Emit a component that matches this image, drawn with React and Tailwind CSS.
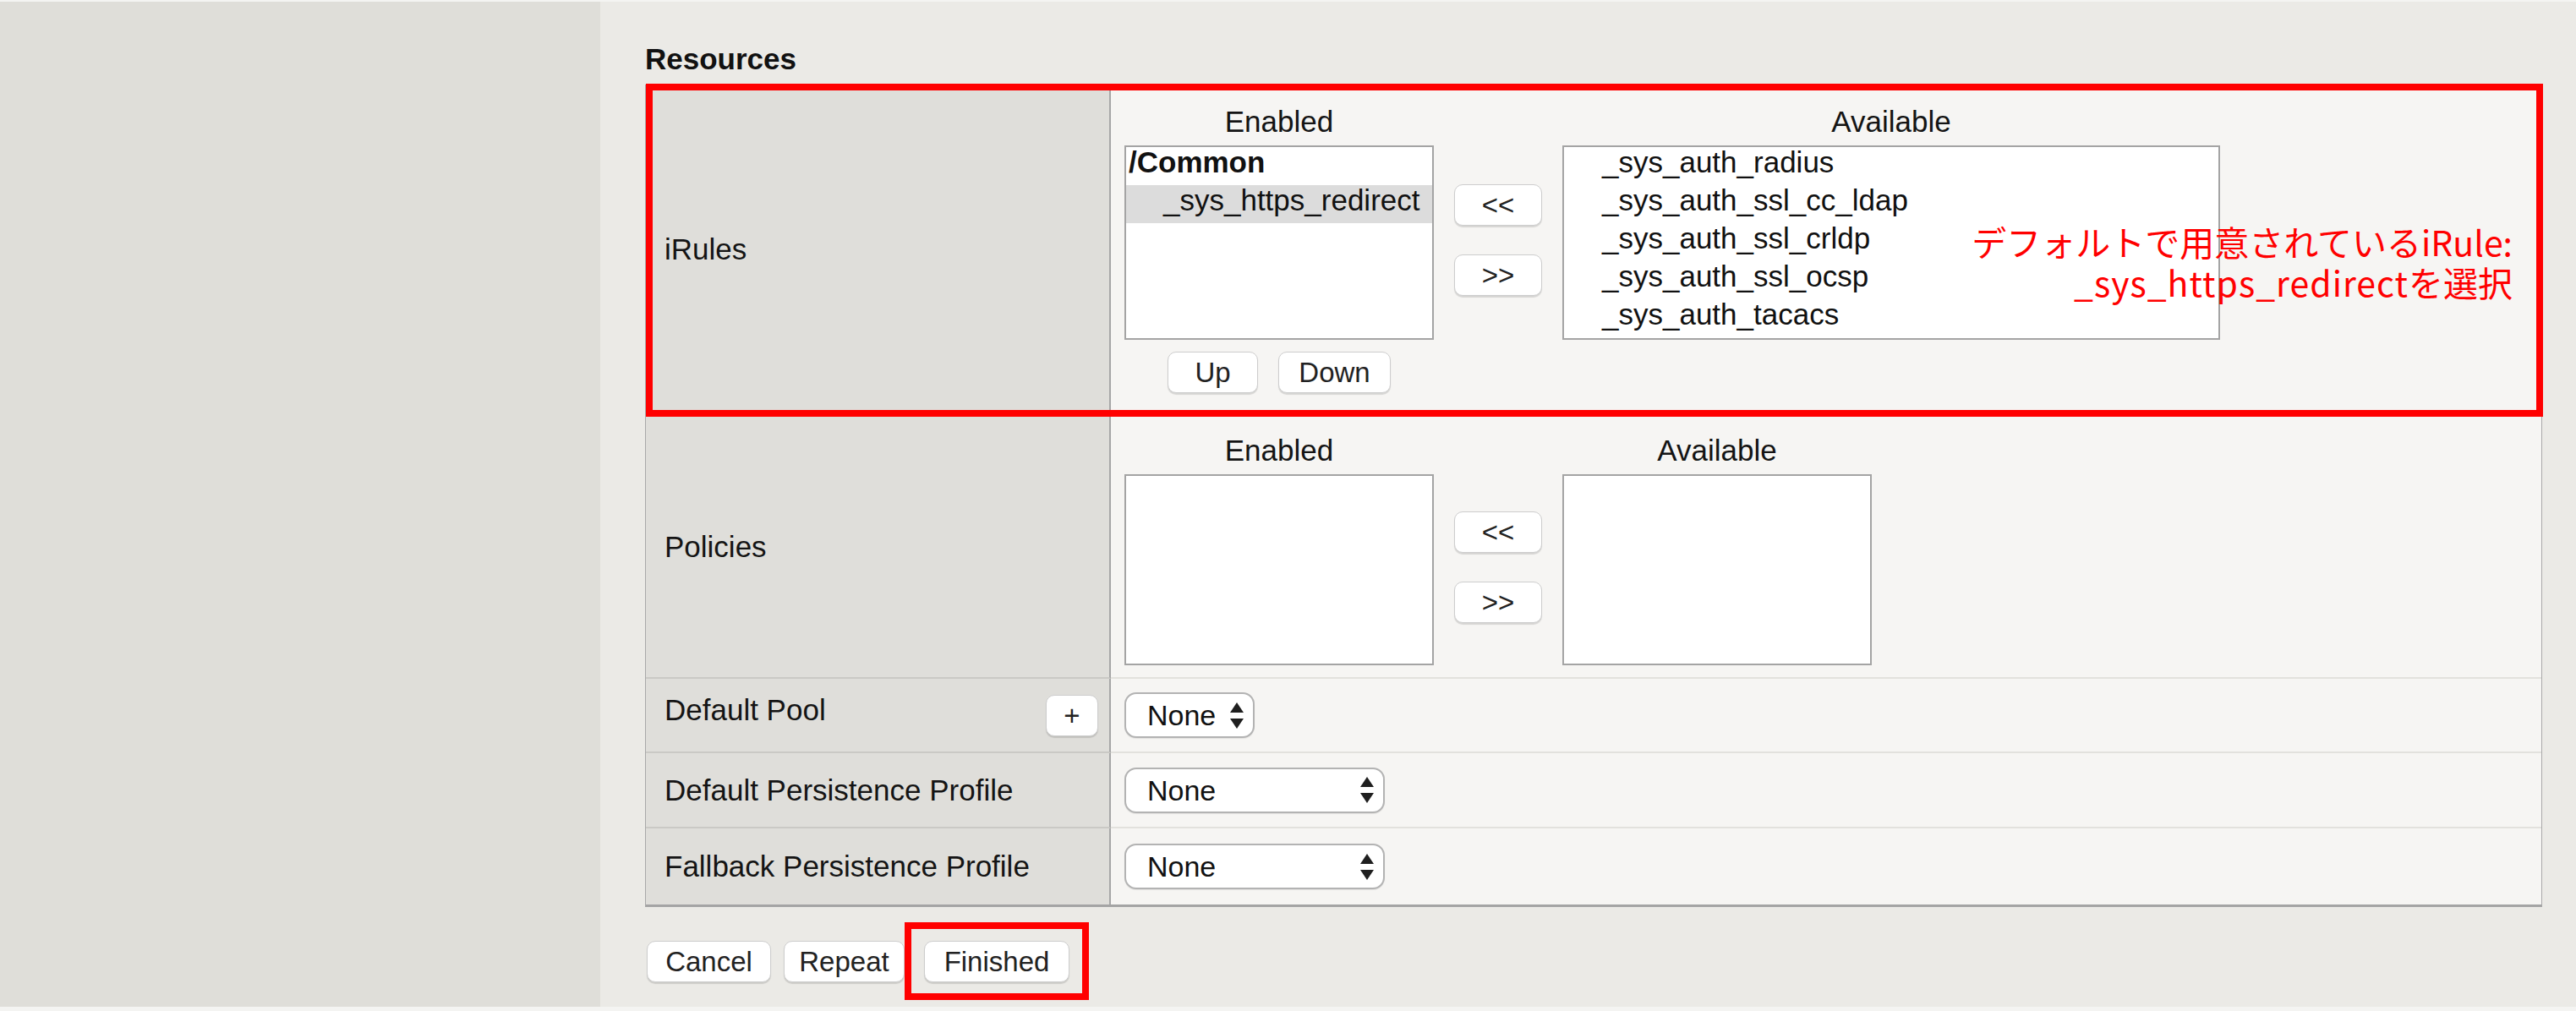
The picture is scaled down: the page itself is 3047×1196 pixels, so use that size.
import React from "react";

const font = "font-['Liberation_Sans',Arial,Helvetica,sans-serif]";

function Btn({ className = "", children }) {
    return (
        <button
            className={`h-[49px] bg-white border border-[#cdcdcd] rounded-[10px] shadow-[0_2px_1px_rgba(0,0,0,0.13)] text-[33px] leading-[36px] text-[#222] flex items-center justify-center ${className}`}
        >
            {children}
        </button>
    );
}

// up / down arrows of a native select
function Arrows() {
    return (
        <svg width="16" height="31" viewBox="0 0 16 31" className="shrink-0">
            <path d="M8 0 L16 12 L0 12 Z" fill="#1f1f1f" />
            <path d="M0 19 L16 19 L8 31 Z" fill="#1f1f1f" />
        </svg>
    );
}

function SelectBox({ className = "" }) {
    return (
        <div
            className={`h-[54px] bg-white border-2 border-[#b3b3b3] rounded-[14px] shadow-[0_1px_1px_rgba(0,0,0,0.08)] flex items-center justify-between pl-[25px] pr-[11px] ${className}`}
        >
            <span className="text-[34px] leading-[36px] text-[#111]">None</span>
            <Arrows />
        </div>
    );
}

function ListBox({ className = "", children }) {
    return (
        <div className={`bg-white border-2 border-[#a4a4a4] overflow-hidden ${className}`}>
            {children}
        </div>
    );
}

function Row({ children, className = "" }) {
    return <div className={`h-[45px] leading-[36px] text-[35px] text-[#111] whitespace-nowrap ${className}`}>{children}</div>;
}

const available = ["_sys_auth_radius", "_sys_auth_ssl_cc_ldap", "_sys_auth_ssl_crldp", "_sys_auth_ssl_ocsp", "_sys_auth_tacacs"];

export default function App() {
    return (
        <div className={`w-[3047px] h-[1196px] bg-[#f4f4f2] pt-[2px] ${font} text-[#141414]`}>
            <div className="flex h-[1189px]">
                {/* SIDEBAR */}
                <div className="w-[710px] bg-[#dfded9]" />

                {/* MAIN */}
                <div className="flex-1 bg-[#ebeae6] pl-[53px] pt-[48px]">
                    <h2 className="text-[35px] leading-[40px] font-bold text-[#111] mb-[10px]">Resources</h2>

                    <div className="w-[2244px] border-l border-r border-[#a9a9a9] border-b-[3px] border-b-[#a4a4a4]">
                        {/* IRULES */}
                        <div className="relative flex h-[392px]">
                            <div className="w-[550px] bg-[#dfdeda] border-r-2 border-r-[#a6a6a6] border-b-2 border-b-[#cac9c5] flex items-center pl-[22px] text-[35px] leading-[36px]">
                                iRules
                            </div>
                            <div className="flex-1 bg-[#f6f5f3] border-b-2 border-b-[#e2e1dd] pt-[26px] pl-[16px] flex gap-x-[24px]">
                                <div className="w-[366px] flex flex-col items-center">
                                    <div className="h-[36px] mb-[10px] text-[35px] leading-[36px]">Enabled</div>
                                    <ListBox className="w-[366px] h-[230px]">
                                        <Row className="font-bold pl-[3px]">/Common</Row>
                                        <Row className="bg-[#dcdcdc] pl-[44px]">_sys_https_redirect</Row>
                                    </ListBox>
                                    <div className="flex gap-[24px] mt-[14px]">
                                        <Btn className="w-[107px]">Up</Btn>
                                        <Btn className="w-[133px]">Down</Btn>
                                    </div>
                                </div>
                                <div className="w-[104px] flex flex-col gap-[34px] pt-[92px]">
                                    <Btn className="w-[104px]">&lt;&lt;</Btn>
                                    <Btn className="w-[104px]">&gt;&gt;</Btn>
                                </div>
                                <div className="w-[778px] flex flex-col items-center">
                                    <div className="h-[36px] mb-[10px] text-[35px] leading-[36px]">Available</div>
                                    <ListBox className="w-[778px] h-[230px]">
                                        {available.map(name => (
                                            <Row key={name} className="pl-[45px]">{name}</Row>
                                        ))}
                                    </ListBox>
                                </div>
                            </div>

                            {/* annotation */}
                            <div className="absolute -top-[1px] left-0 -right-[2px] -bottom-[1px] border-[8px] border-[#ff0000] pointer-events-none" />
                            <div className="absolute top-[161px] right-[34px] flex flex-col items-end text-[41px] leading-[48px] text-[#ff0000] font-['Noto_Sans_CJK_JP',sans-serif] whitespace-nowrap">
                                <div className="h-[48px]">デフォルトで用意されているiRule:</div>
                                <div className="h-[48px]">
                                    <span className="tracking-[1px]">_sys_https_redirect</span>を選択
                                </div>
                            </div>
                        </div>

                        {/* POLICIES */}
                        <div className="flex h-[311px]">
                            <div className="w-[550px] bg-[#dfdeda] border-r-2 border-r-[#a6a6a6] border-b-2 border-b-[#cac9c5] flex items-center pl-[22px] text-[35px] leading-[36px]">
                                Policies
                            </div>
                            <div className="flex-1 bg-[#f6f5f3] border-b-2 border-b-[#e2e1dd] pt-[23px] pl-[16px] flex gap-x-[24px]">
                                <div className="w-[366px] flex flex-col items-center">
                                    <div className="h-[36px] mb-[10px] text-[35px] leading-[36px]">Enabled</div>
                                    <ListBox className="w-[366px] h-[226px]" />
                                </div>
                                <div className="w-[104px] flex flex-col gap-[34px] pt-[90px]">
                                    <Btn className="w-[104px]">&lt;&lt;</Btn>
                                    <Btn className="w-[104px]">&gt;&gt;</Btn>
                                </div>
                                <div className="w-[366px] flex flex-col items-center">
                                    <div className="h-[36px] mb-[10px] text-[35px] leading-[36px]">Available</div>
                                    <ListBox className="w-[366px] h-[226px]" />
                                </div>
                            </div>
                        </div>

                        {/* DEFAULT POOL */}
                        <div className="flex h-[88px]">
                            <div className="w-[550px] bg-[#dfdeda] border-r-2 border-r-[#a6a6a6] border-b-2 border-b-[#cac9c5] flex justify-between items-start pl-[22px] pr-[13px] pt-[19px]">
                                <span className="text-[35px] leading-[36px]">Default Pool</span>
                                <Btn className="w-[62px] h-[48px] rounded-[9px]">+</Btn>
                            </div>
                            <div className="flex-1 bg-[#f6f5f3] border-b-2 border-b-[#e2e1dd] pl-[16px] flex items-center">
                                <SelectBox className="w-[154px]" />
                            </div>
                        </div>

                        {/* DEFAULT PERSISTENCE */}
                        <div className="flex h-[89px]">
                            <div className="w-[550px] bg-[#dfdeda] border-r-2 border-r-[#a6a6a6] border-b-2 border-b-[#cac9c5] flex items-center pl-[22px] text-[35px] leading-[36px]">
                                Default Persistence Profile
                            </div>
                            <div className="flex-1 bg-[#f6f5f3] border-b-2 border-b-[#e2e1dd] pl-[16px] flex items-center">
                                <SelectBox className="w-[308px]" />
                            </div>
                        </div>

                        {/* FALLBACK PERSISTENCE */}
                        <div className="flex h-[90px]">
                            <div className="w-[550px] bg-[#dfdeda] border-r-2 border-r-[#a6a6a6] flex items-center pl-[22px] text-[35px] leading-[36px]">
                                Fallback Persistence Profile
                            </div>
                            <div className="flex-1 bg-[#f6f5f3] pl-[16px] flex items-center">
                                <SelectBox className="w-[308px]" />
                            </div>
                        </div>
                    </div>

                    {/* ACTIONS */}
                    <div className="flex items-start mt-[40px] ml-[2px]">
                        <Btn className="w-[147px]">Cancel</Btn>
                        <Btn className="w-[143px] ml-[15px]">Repeat</Btn>
                        <div className="relative ml-[23px]">
                            <Btn className="w-[172px]">Finished</Btn>
                            <div className="absolute -left-[23px] -top-[22px] -right-[23px] -bottom-[21px] border-[8px] border-[#ff0000] pointer-events-none" />
                        </div>
                    </div>
                </div>
            </div>
        </div>
    );
}
